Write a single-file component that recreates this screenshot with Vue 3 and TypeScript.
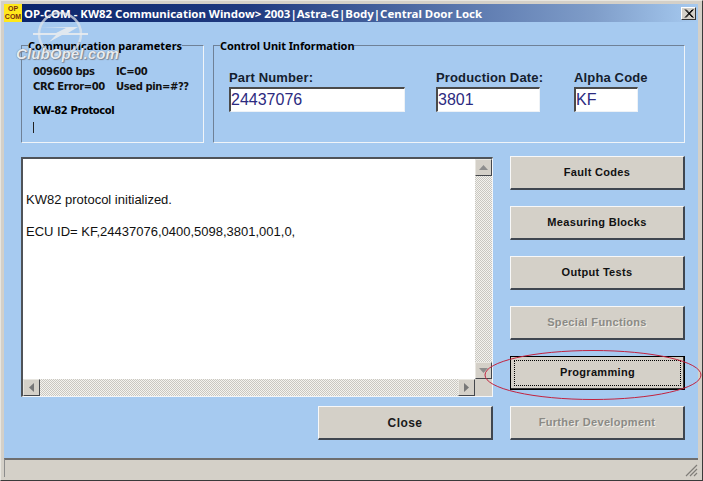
<script setup lang="ts">
const sideButtons = [
  { label: 'Fault Codes', state: '' },
  { label: 'Measuring Blocks', state: '' },
  { label: 'Output Tests', state: '' },
  { label: 'Special Functions', state: 'off' },
  { label: 'Programming', state: 'focus' },
  { label: 'Further Development', state: 'off' },
]
</script>

<template>
  <div class="window">
    <div class="titlebar">
      <div class="appicon"><span>OP</span><span>COM</span></div>
      <div class="title">OP-COM - KW82 Communication Window&gt; 2003|Astra-G|Body|Central Door Lock</div>
      <div class="close-x">
        <svg width="12" height="11" viewBox="0 0 12 11"><path d="M2 1.5 L9.5 9.5 M3 1.5 L10.5 9.5 M9.5 1.5 L2 9.5 M10.5 1.5 L3 9.5" stroke="#000" stroke-width="1" fill="none" /></svg>
      </div>
    </div>

    <div class="client">
      <div class="top">
        <fieldset class="group comm">
          <legend>Communication parameters</legend>
          <div class="comm-row first"><span class="c1">009600 bps</span><span>IC=00</span></div>
          <div class="comm-row"><span class="c1">CRC Error=00</span><span>Used pin=#??</span></div>
          <div class="comm-proto">KW-82 Protocol</div>
          <div class="caret"></div>
        </fieldset>
        <fieldset class="group info">
          <legend>Control Unit Information</legend>
          <div class="field f1"><label>Part Number:</label><div class="input">24437076</div></div>
          <div class="field f2"><label>Production Date:</label><div class="input">3801</div></div>
          <div class="field f3"><label>Alpha Code</label><div class="input">KF</div></div>
        </fieldset>
      </div>

      <div class="main">
        <div class="left">
          <div class="log">
            <div class="log-body">
              <div class="log-text">
                <p>KW82 protocol initialized.</p>
                <p>ECU ID= KF,24437076,0400,5098,3801,001,0,</p>
              </div>
              <div class="vscroll">
                <div class="sbtn"><svg width="9" height="5" viewBox="0 0 9 5"><path d="M4.5 0 L9 5 H0 Z" fill="#8d8d8d" /></svg></div>
                <div class="track"></div>
                <div class="sbtn"><svg width="9" height="5" viewBox="0 0 9 5"><path d="M4.5 5 L9 0 H0 Z" fill="#8d8d8d" /></svg></div>
              </div>
            </div>
            <div class="hscroll">
              <div class="sbtn h"><svg width="5" height="9" viewBox="0 0 5 9"><path d="M0 4.5 L5 0 V9 Z" fill="#777" /></svg></div>
              <div class="track"></div>
              <div class="sbtn h"><svg width="5" height="9" viewBox="0 0 5 9"><path d="M5 4.5 L0 0 V9 Z" fill="#777" /></svg></div>
              <div class="corner"></div>
            </div>
          </div>
          <button class="btn close">Close</button>
        </div>
        <div class="right">
          <button v-for="b in sideButtons" :key="b.label" class="btn" :class="b.state">
            <span class="btn-label">{{ b.label }}</span>
          </button>
        </div>
      </div>
    </div>

    <div class="statusbar">
      <svg class="grip" width="14" height="14" viewBox="0 0 14 14"><path d="M13 2 L2 13 M13 6 L6 13 M13 10 L10 13" stroke="#7f7d78" stroke-width="1.2" fill="none" /></svg>
    </div>

    <div class="watermark">
      <svg width="112" height="62" viewBox="0 0 112 62">
        <circle cx="44" cy="29" r="21" fill="none" stroke="#dfe4ea" stroke-width="2.5" opacity="0.75" />
        <path d="M17 28 H40 L50 23 H24 L54 22 H62 L52 28 H72 V30 H46 L33 37 L40 30 H17 Z" fill="#e8ebee" opacity="0.9" />
      </svg>
      <span>ClubOpel.com</span>
    </div>

    <svg class="ring" width="219" height="52" viewBox="0 0 219 52">
      <ellipse cx="109" cy="26" rx="108" ry="24.5" fill="none" stroke="#c2233f" stroke-width="1" />
    </svg>
  </div>
</template>

<style>
html, body { margin: 0; padding: 0; background: #fff; }
</style>

<style scoped>
.window {
  position: relative;
  width: 703px;
  height: 481px;
  box-sizing: border-box;
  padding: 3px 4px 3px 3px;
  background: #d4d0c8;
  border-top: 1px solid #e8e6e0;
  border-left: 1px solid #e8e6e0;
  border-right: 1px solid #3a3a3a;
  border-bottom: 1px solid #3a3a3a;
  display: flex;
  flex-direction: column;
  font-family: "Liberation Sans", Arial, sans-serif;
  overflow: hidden;
  color: #000;
}
.titlebar {
  height: 18px;
  flex: none;
  display: flex;
  align-items: center;
  background: linear-gradient(90deg, #0a246a 0%, #1f3a80 35%, #7f9dc9 85%, #a6caf0 100%);
}
.appicon {
  width: 18px;
  height: 18px;
  flex: none;
  background: #ffe81a;
  color: #7a2f10;
  font-size: 7px;
  font-weight: 700;
  line-height: 8px;
  display: flex;
  flex-direction: column;
  align-items: center;
  justify-content: center;
}
.title {
  margin-left: 2px;
  flex: 1;
  color: #fff;
  font-family: "Noto Sans", sans-serif;
  font-size: 11.45px;
  font-weight: 700;
  white-space: nowrap;
}
.close-x {
  width: 15px;
  height: 13px;
  margin-right: 2px;
  background: #d4d0c8;
  box-sizing: border-box;
  border: 1px solid;
  border-color: #fff #333 #333 #fff;
  display: flex;
  align-items: center;
  justify-content: center;
}
.client {
  flex: 1;
  background: #a6caf0;
  padding: 17px 13px 0 17px;
}
.top {
  display: flex;
  gap: 9px;
  height: 104px;
}
.group {
  margin: 0;
  box-sizing: border-box;
  height: 104px;
  min-width: 0;
  border: 1px solid;
  border-color: #6f8197 #f0f4f8 #f0f4f8 #6f8197;
  position: relative;
  background: none;
}
.group legend {
  font-size: 11px;
  font-weight: 700;
  line-height: 13px;
  padding: 0;
  font-family: "Noto Sans", sans-serif;
  white-space: nowrap;
}
.comm {
  width: 183px;
  padding: 0 0 0 11px;
  flex: none;
}
.comm legend { margin-left: -5px; }
.comm-row {
  display: flex;
  font-family: "DejaVu Sans", sans-serif;
  font-size: 10px;
  font-weight: 700;
  line-height: 15px;
  color: #111;
  letter-spacing: -0.4px;
  height: 15px;
  white-space: nowrap;
}
.comm-row.first { margin-top: 12px; }
.c1 { width: 83px; flex: none; }
.comm-proto {
  font-family: "DejaVu Sans", sans-serif;
  font-size: 10px;
  font-weight: 700;
  letter-spacing: -0.4px;
  line-height: 14px;
  margin-top: 10px;
}
.caret {
  width: 1px;
  height: 11px;
  background: #222;
  margin-top: 4px;
}
.info {
  width: 472px;
  flex: none;
  padding: 0;
  display: flex;
  align-items: flex-start;
}
.info legend { margin-left: 6px; letter-spacing: -0.1px; }
.field { display: flex; flex-direction: column; padding-top: 18px; }
.field label {
  font-size: 13px;
  font-weight: 700;
  line-height: 15px;
  letter-spacing: 0.15px;
  color: #14202e;
  margin-bottom: 2px;
  white-space: nowrap;
}
.input {
  box-sizing: border-box;
  height: 25px;
  background: #fff;
  border: 1px solid;
  border-width: 2px 1px 1px 2px;
  border-color: #4a4a4a #eef2f6 #eef2f6 #4a4a4a;
  color: #2c2a80;
  font-size: 16px;
  line-height: 22px;
  padding-left: 0;
}
.f1 { margin-left: 15px; width: 176px; }
.f2 { margin-left: 31px; width: 104px; }
.f3 { margin-left: 34px; width: 64px; }
.main {
  display: flex;
  gap: 17px;
  margin-top: 14px;
}
.left {
  width: 472px;
  flex: none;
  display: flex;
  flex-direction: column;
  align-items: flex-end;
  gap: 9px;
}
.log {
  box-sizing: border-box;
  width: 100%;
  height: 240px;
  border: 2px solid;
  border-width: 2px 1px 1px 2px;
  border-color: #4f5358 #f4f6f8 #f4f6f8 #4f5358;
  background: #fff;
  display: flex;
  flex-direction: column;
}
.log-body { flex: 1; display: flex; min-height: 0; }
.log-text {
  flex: 1;
  padding: 33px 0 0 3px;
  font-size: 13px;
  color: #111;
}
.log-text p {
  margin: 0 0 17px;
  line-height: 15px;
}
.vscroll { width: 17px; display: flex; flex-direction: column; }
.hscroll { height: 17px; display: flex; flex: none; }
.track {
  flex: 1;
  background-color: #eceae6;
  background-image: repeating-conic-gradient(#c9c7c1 0 25%, #f4f3ef 0 50%);
  background-size: 2px 2px;
}
.sbtn {
  width: 17px;
  height: 17px;
  flex: none;
  box-sizing: border-box;
  background: #d4d0c8;
  border: 1px solid;
  border-color: #e8e6e0 #44474c #44474c #e8e6e0;
  display: flex;
  align-items: center;
  justify-content: center;
}
.corner { width: 17px; background: #d4d0c8; flex: none; }
.btn {
  box-sizing: border-box;
  display: block;
  padding: 0 0 2px;
  width: 175px;
  height: 34px;
  background: #d4d0c8;
  border: 2px solid;
  border-width: 1px 2px 2px 1px;
  border-color: #f8f8f8 #3f4650 #3f4650 #f8f8f8;
  font-family: "Liberation Sans", Arial, sans-serif;
  font-size: 11px;
  font-weight: 700;
  color: #111;
  letter-spacing: 0.32px;
}
.btn.close { font-size: 12px; color: #1a1a1a; padding: 0; letter-spacing: 0.45px; }
.right {
  width: 175px;
  flex: none;
  display: flex;
  flex-direction: column;
  gap: 16px;
  margin-top: -1px;
}
.btn.off { color: #8b8a85; text-shadow: 1px 1px 0 #eeece6; }
.btn.focus {
  border: 1px solid #000;
  box-shadow: inset -1px -1px 0 #333;
  padding: 3px;
}
.btn.focus .btn-label {
  display: flex;
  align-items: center;
  justify-content: center;
  height: 100%;
  border: 1px dotted #000;
  box-sizing: border-box;
  padding-bottom: 2px;
}
.statusbar {
  position: relative;
  height: 19px;
  flex: none;
  box-sizing: border-box;
  background: #d4d0c8;
  border-top: 2px solid #6e6e6e;
  border-left: 1px solid #8c8c8c;
}
.grip { position: absolute; right: 0; bottom: 0; }
.watermark {
  position: absolute;
  left: 15px;
  top: 4px;
  width: 112px;
  height: 62px;
  pointer-events: none;
}
.watermark svg { position: absolute; left: 0; top: 0; }
.watermark span {
  position: absolute;
  left: 0;
  top: 40px;
  font-family: "Liberation Sans", sans-serif;
  font-style: italic;
  font-weight: 700;
  font-size: 15px;
  letter-spacing: 0.1px;
  color: #e8ebef;
  text-shadow: 0 0 1px #5f6878, 1px 1px 1px #7f8a9a;
  white-space: nowrap;
}
.ring {
  position: absolute;
  left: 483px;
  top: 348px;
  pointer-events: none;
}
</style>
